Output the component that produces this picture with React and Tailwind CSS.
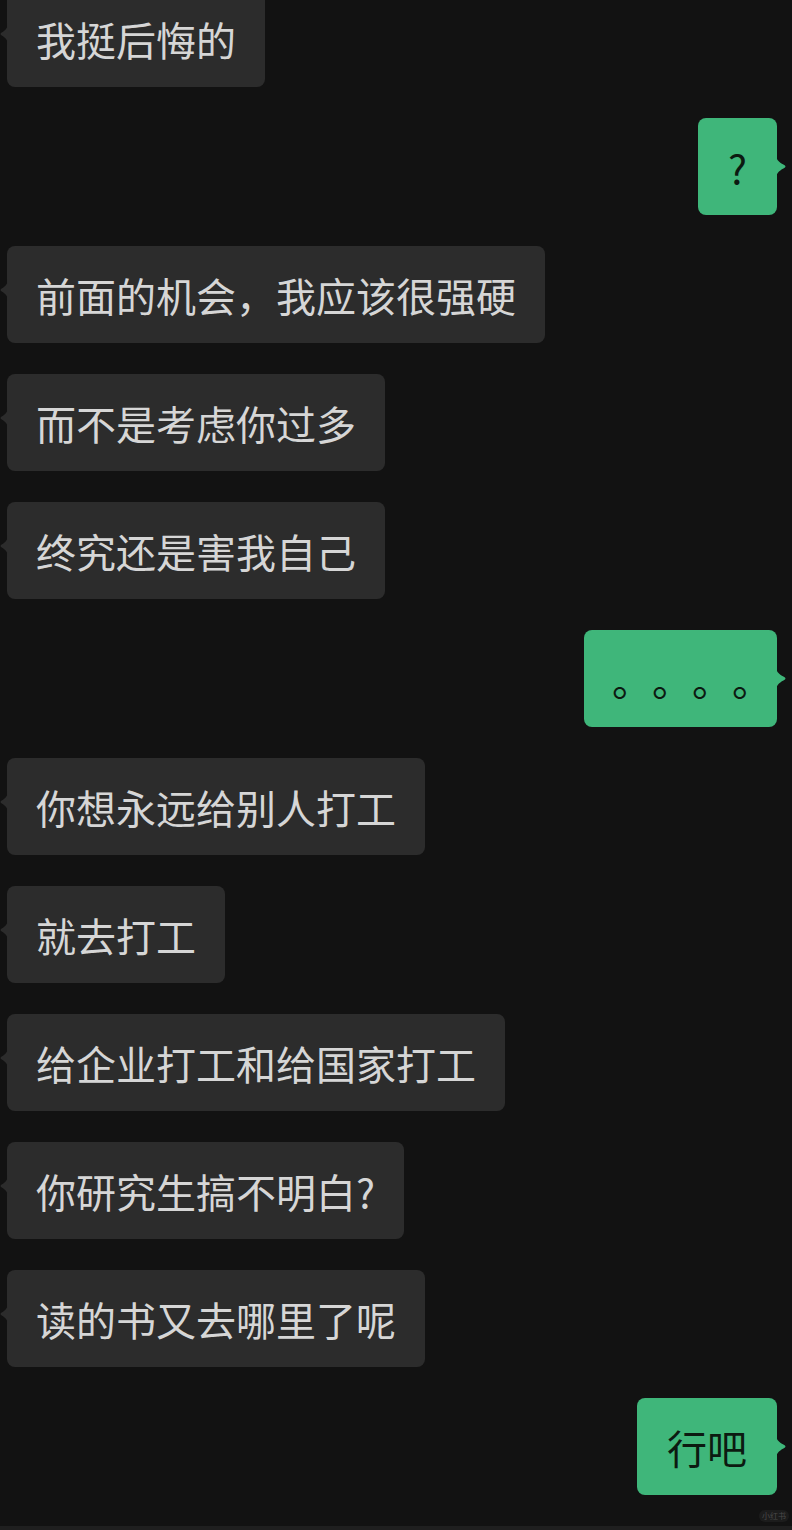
import React from "react";

const messages = [
  { side: "l", text: "我挺后悔的" },
  { side: "r", text: "?" },
  { side: "l", text: "前面的机会，我应该很强硬" },
  { side: "l", text: "而不是考虑你过多" },
  { side: "l", text: "终究还是害我自己" },
  { side: "r", text: "。。。。", dots: true },
  { side: "l", text: "你想永远给别人打工" },
  { side: "l", text: "就去打工" },
  { side: "l", text: "给企业打工和给国家打工" },
  { side: "l", text: "你研究生搞不明白?" },
  { side: "l", text: "读的书又去哪里了呢" },
  { side: "r", text: "行吧" },
];

function LeftTail() {
  return (
    <svg className="absolute left-[-7px] top-[33px]" width="8" height="22" viewBox="0 0 8 22">
      <path d="M8 0 C8 6 4 8 1 10 Q0 11 1 12 C4 14 8 16 8 22 Z" fill="#2c2c2c" />
    </svg>
  );
}

function RightTail() {
  return (
    <svg className="absolute right-[-9px] top-[37px]" width="10" height="24" viewBox="0 0 10 24">
      <path d="M0 0 C0 6 5 8 9 10.5 Q10 11.5 9 12.5 C5 15 0 17 0 24 Z" fill="#3fb67a" />
    </svg>
  );
}

function Bubble({ m }) {
  if (m.side === "l") {
    return (
      <div className="flex justify-start pl-[7px]">
        <div className="relative h-[97px] flex items-center rounded-lg bg-[#2c2c2c] pl-[29px] pr-[29px] text-[40px] leading-none text-[#d6d6d6] whitespace-nowrap">
          <LeftTail />
          <span>{m.text}</span>
        </div>
      </div>
    );
  }
  return (
    <div className="flex justify-end pr-[15px]">
      <div
        className={
          "relative h-[97px] flex items-center rounded-lg bg-[#3fb67a] text-[40px] leading-none text-[#0c1a11] whitespace-nowrap " +
          (m.dots ? "w-[193px] pl-[28px] [text-spacing-trim:space-all] [font-feature-settings:'halt'_0]" : "px-[30px]")
        }
      >
        <RightTail />
        <span>{m.text}</span>
      </div>
    </div>
  );
}

export default function App() {
  return (
    <div
      className="relative w-[792px] h-[1530px] overflow-hidden bg-[#121212] [text-spacing-trim:space-all]"
      style={{ fontFamily: '"Noto Sans CJK SC", "Noto Sans", sans-serif' }}
    >
      <div className="flex flex-col gap-[31px] mt-[-10px]">
        {messages.map((m, i) => (
          <Bubble key={i} m={m} />
        ))}
      </div>
      <div className="absolute left-0 right-0 bottom-0 h-[4px] bg-[#1f1f1f]" />
      <div className="absolute right-[3px] bottom-[8px] h-[12px] px-[3px] rounded-full bg-[#1c1c1c] text-[8px] leading-[12px] text-[#4a4a4a]">
        小红书
      </div>
    </div>
  );
}
